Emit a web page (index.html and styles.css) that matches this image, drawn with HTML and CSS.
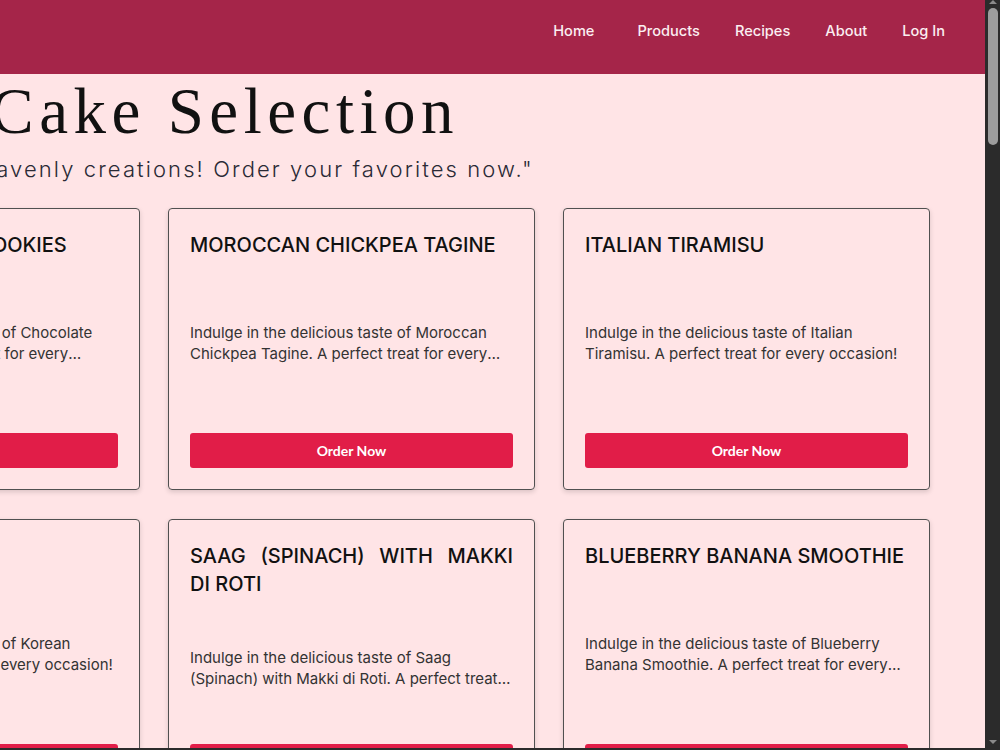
FILE: index.html
```html
<!DOCTYPE html>
<html lang="en">
<head>
    <meta charset="UTF-8">
    <meta name="viewport" content="width=device-width, initial-scale=1.0">
    <title>Sweet Rose Bakery</title>
    <link rel="stylesheet" href="styles.css">
</head>
<body>
    <div class="page" id="page">
        <header class="site-header">
            <nav class="site-nav">
                <a href="#">Home</a>
                <a href="#">Products</a>
                <a href="#">Recipes</a>
                <a href="#">About</a>
                <a href="#">Log In</a>
            </nav>
        </header>
        <main class="menu">
            <section class="intro">
                <h1 class="intro-title">Our Cake Selection</h1>
                <p class="intro-text">"Indulge in our heavenly creations! Order your favorites now."</p>
            </section>
            <div class="cards" id="cards"></div>
        </main>
    </div>
    <div class="scroll-rail">
        <span class="scroll-arrow scroll-arrow-up"></span>
        <div class="scroll-track" id="track">
            <div class="scroll-thumb" id="thumb"></div>
        </div>
        <span class="scroll-arrow scroll-arrow-down"></span>
    </div>
    <script src="script.js"></script>
</body>
</html>
```

FILE: styles.css
```css
body {
    box-sizing: border-box;
    height: 100vh;
    margin: 0;
    display: flex;
    overflow: hidden;
    border-bottom: 2px solid #2b2b2b;
    font-family: "Inter", "Liberation Sans", sans-serif;
    color: #1a1a1a;
    background: #ffe4e6;
}

/* page scrolls in its own box; the rail beside it is our own scrollbar */
.page {
    flex: 1;
    min-width: 0;
    overflow-x: hidden;
    overflow-y: scroll;
    scrollbar-width: none;
}

.scroll-rail {
    width: 15px;
    flex-shrink: 0;
    background: #2b2b2b;
    display: flex;
    flex-direction: column;
}
.scroll-track {
    flex: 1;
    padding: 0 2px 0 3px;
}
.scroll-thumb {
    height: 134px;
    border-radius: 5px;
    background: #9d9d9d;
}
.scroll-arrow {
    display: flex;
    justify-content: center;
    height: 8px;
}
.scroll-arrow::before {
    content: "";
    border-left: 4px solid transparent;
    border-right: 4px solid transparent;
}
.scroll-arrow-up::before {
    margin-top: 0;
    border-bottom: 4px solid #8a8a8a;
    height: 0;
}
.scroll-arrow-down {
    height: 12px;
    align-items: center;
}
.scroll-arrow-down::before {
    border-top: 4px solid #8a8a8a;
    height: 0;
}

.site-header {
    box-sizing: border-box;
    height: 74px;
    padding: 21px 40px 0;
    background: #a52549;
    display: flex;
    justify-content: flex-end;
    align-items: flex-start;
}

.site-nav {
    display: flex;
    gap: 35px;
}
.site-nav a {
    color: #fbeef1;
    text-decoration: none;
    font-size: 14.6px;
    font-weight: 500;
    line-height: 20px;
}
.site-nav a:first-child {
    margin-right: 8px;
}

.menu {
    margin-left: -227px;
    padding-bottom: 40px;
}

.intro {
    width: 764px;
    padding-top: 5px;
    text-align: center;
}
.intro-title {
    margin: 0;
    font-family: "Liberation Serif", serif;
    font-weight: 400;
    font-size: 65px;
    line-height: 65px;
    letter-spacing: 5.5px;
    color: #111;
}
.intro-text {
    margin: 10px 0 24px;
    font-size: 22px;
    font-weight: 300;
    line-height: 30px;
    letter-spacing: 2.1px;
    white-space: nowrap;
    color: #2a2a35;
}

.cards {
    display: grid;
    grid-template-columns: repeat(3, 367px);
    gap: 29px 28px;
}

.card {
    box-sizing: border-box;
    height: 282px;
    padding: 22px 21px 21px;
    border: 1px solid #505050;
    border-radius: 4px;
    box-shadow: 0 2px 5px rgba(0, 0, 0, 0.15);
    display: flex;
    flex-direction: column;
    justify-content: space-between;
}

.card-title {
    margin: 0;
    font-size: 20px;
    font-weight: 500;
    line-height: 28px;
    text-transform: uppercase;
    text-align: justify;
    color: #111;
}

.card-text {
    margin: 0 0 7px;
    font-size: 15px;
    line-height: 21px;
    color: #333;
    display: -webkit-box;
    -webkit-line-clamp: 2;
    -webkit-box-orient: vertical;
    overflow: hidden;
}

.card-button {
    height: 35px;
    border: none;
    border-radius: 3px;
    background: #e11d48;
    color: #fff;
    font-family: "Lato", sans-serif;
    font-size: 14px;
    font-weight: 700;
    cursor: pointer;
}
```

FILE: script.js
```js
// \u00a0 keeps short words like "di Roti" together on one line
const dishes = [
    'Chocolate Chip Cookies', 'Moroccan Chickpea Tagine', 'Italian Tiramisu',
    'Korean Bibimbap', 'Saag (Spinach) with Makki di\u00a0Roti', 'Blueberry Banana Smoothie',
    'Red Velvet Cake', 'Greek Moussaka', 'Japanese Matcha Roll',
    'French Macarons', 'Mexican Churros', 'Thai Mango Sticky Rice',
    'Spanish Paella', 'Lemon Drizzle Cake', 'Indian Gulab Jamun',
    'Vietnamese Pho', 'Carrot Walnut Cake', 'Turkish Baklava',
    'Strawberry Cheesecake', 'Brazilian Brigadeiros', 'Apple Cinnamon Pie',
    'Lebanese Tabbouleh', 'Black Forest Gateau', 'Portuguese Pastel de Nata',
    'Hawaiian Poke Bowl', 'Swiss Chocolate Fondue', 'Pumpkin Spice Muffins',
    'Chinese Mooncakes', 'Banana Bread', 'German Apple Strudel',
    'Peach Cobbler', 'Russian Honey Cake', 'Caramel Flan',
    'Coconut Macaroons', 'Pistachio Kunafa', 'Vanilla Bean Cupcakes'
];

const list = document.getElementById('cards');

dishes.forEach(name => {
    const card = document.createElement('article');
    card.className = 'card';
    card.innerHTML = `
        <h2 class="card-title">${name}</h2>
        <p class="card-text">Indulge in the delicious taste of ${name}. A perfect treat for every occasion!</p>
        <button class="card-button">Order Now</button>
    `;
    list.appendChild(card);
});

// size and move the rail thumb from the page's scroll position
const page = document.getElementById('page');
const track = document.getElementById('track');
const thumb = document.getElementById('thumb');

function syncThumb() {
    const room = track.clientHeight - 5;
    const size = Math.max(24, room * page.clientHeight / page.scrollHeight);
    const max = page.scrollHeight - page.clientHeight;
    const offset = max > 0 ? (page.scrollTop / max) * (room - size) : 0;
    thumb.style.height = size + 'px';
    thumb.style.transform = `translateY(${offset}px)`;
}

page.addEventListener('scroll', syncThumb);
window.addEventListener('resize', syncThumb);
syncThumb();
```
